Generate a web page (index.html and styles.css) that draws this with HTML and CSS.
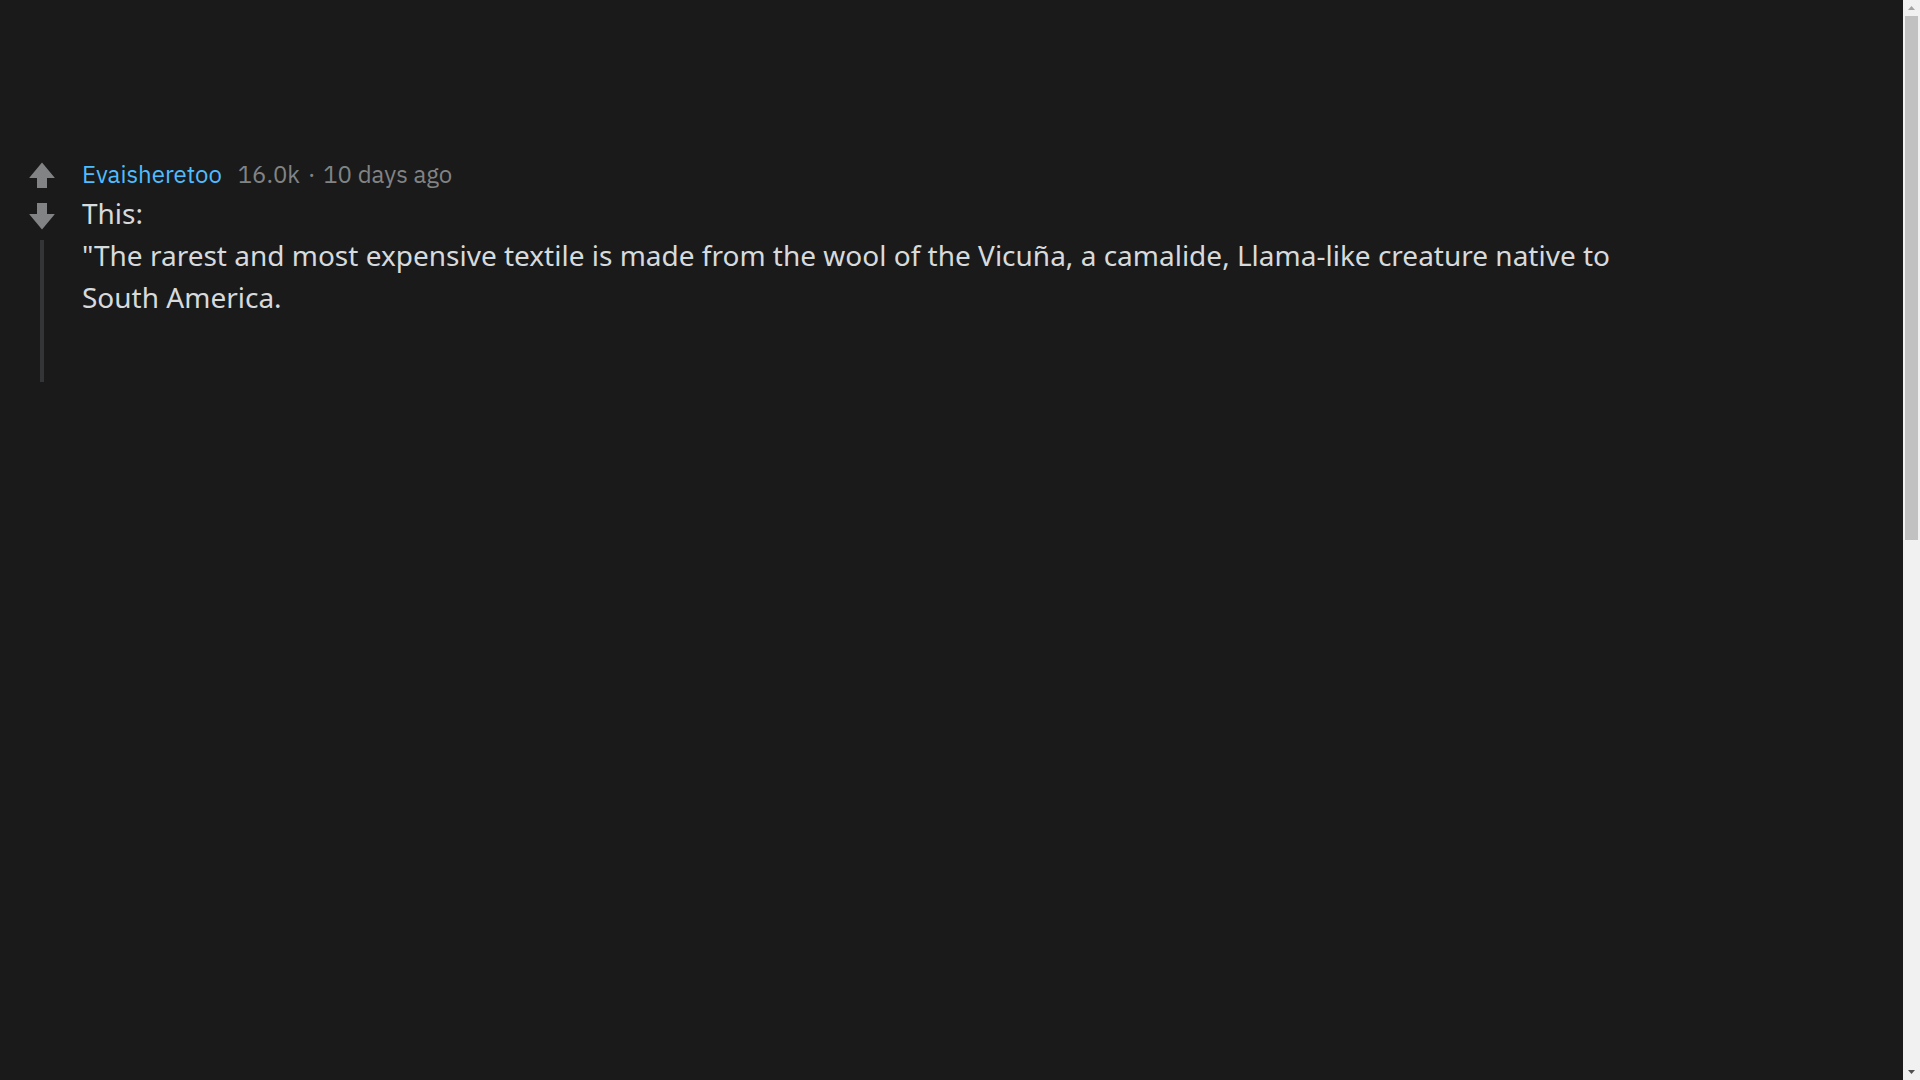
FILE: index.html
```html
<!DOCTYPE html>
<html lang="en">
<head>
<meta charset="utf-8">
<title>Comment</title>
<link rel="stylesheet" href="styles.css">
</head>
<body>
<div class="app">
<main class="page">
  <div class="comment">
    <div class="votes">
      <button class="vote up" aria-label="upvote">
        <svg width="26" height="26" viewBox="0 0 26 26"><path d="M13 0.5 L25.5 15.5 Q26 16 25.3 16 L18 16 L18 26 L8 26 L8 16 L0.7 16 Q0 16 0.5 15.5 Z" fill="#818384"/></svg>
      </button>
      <button class="vote down" aria-label="downvote">
        <svg width="26" height="27" viewBox="0 0 26 27"><path d="M8 0 L18 0 L18 11 L25.3 11 Q26 11 25.5 11.5 L13 26.5 L0.5 11.5 Q0 11 0.7 11 L8 11 Z" fill="#818384"/></svg>
      </button>
      <div class="thread-line"></div>
    </div>
    <div class="content">
      <div class="meta">
        <a class="author" href="#">Evaisheretoo</a>
        <span class="score">16.0k</span>
        <span class="dot">·</span>
        <span class="time">10 days ago</span>
      </div>
      <div class="body">
        <p>This:</p>
        <p>"The rarest and most expensive textile is made from the wool of the Vicuña, a camalide, Llama-like creature native to South America.</p>
      </div>
    </div>
  </div>
</main>
<div class="scrollbar" aria-hidden="true">
  <div class="sb-btn"><svg width="7" height="4" viewBox="0 0 7 4"><path d="M3.5 0 L7 4 L0 4 Z" fill="#a3a3a3"/></svg></div>
  <div class="sb-track"><div class="sb-thumb"></div></div>
  <div class="sb-btn"><svg width="7" height="4" viewBox="0 0 7 4"><path d="M0 0 L7 0 L3.5 4 Z" fill="#505050"/></svg></div>
</div>
</div>
</body>
</html>
```
FILE: styles.css
```css
html, body {
  margin: 0;
  padding: 0;
  background: #1a1a1b;
  height: 100%;
  overflow: hidden;
}

.app {
  display: flex;
  height: 100vh;
}

.page {
  flex: 1;
  padding: 158px 0 0 16px;
  box-sizing: border-box;
}

.comment {
  display: flex;
  align-items: flex-start;
}

.votes {
  width: 52px;
  display: flex;
  flex-direction: column;
  align-items: center;
  padding-top: 4px;
}

.vote {
  display: block;
  border: 0;
  padding: 0;
  margin: 0;
  background: none;
  line-height: 0;
}

.vote svg { display: block; }

.vote.down { margin-top: 15px; }

.thread-line {
  width: 4px;
  height: 142px;
  margin-top: 10px;
  background: #343536;
}

.content {
  margin-left: 14px;
  width: 1600px;
}

.meta {
  font-family: "IBM Plex Sans", Roboto, "Noto Sans", sans-serif;
  font-size: 24px;
  line-height: 32px;
  color: #818384;
  white-space: nowrap;
}

.author {
  color: #4fbcff;
  text-decoration: none;
  margin-right: 10px;
}

.dot {
  margin: 0 2px;
}

.body {
  padding-top: 2px;
  font-family: "Noto Sans", "Open Sans", sans-serif;
  font-size: 28px;
  line-height: 42px;
  color: #d7dadc;
}

.body p {
  margin: 0;
}

.scrollbar {
  width: 17px;
  flex: none;
  background: #f1f1f1;
  display: flex;
  flex-direction: column;
}

.sb-btn {
  height: 16px;
  display: flex;
  align-items: center;
  justify-content: center;
}

.sb-btn svg { display: block; }

.sb-track {
  flex: 1;
}

.sb-thumb {
  height: 524px;
  margin: 0 2px;
  background: #c1c1c1;
}
```
